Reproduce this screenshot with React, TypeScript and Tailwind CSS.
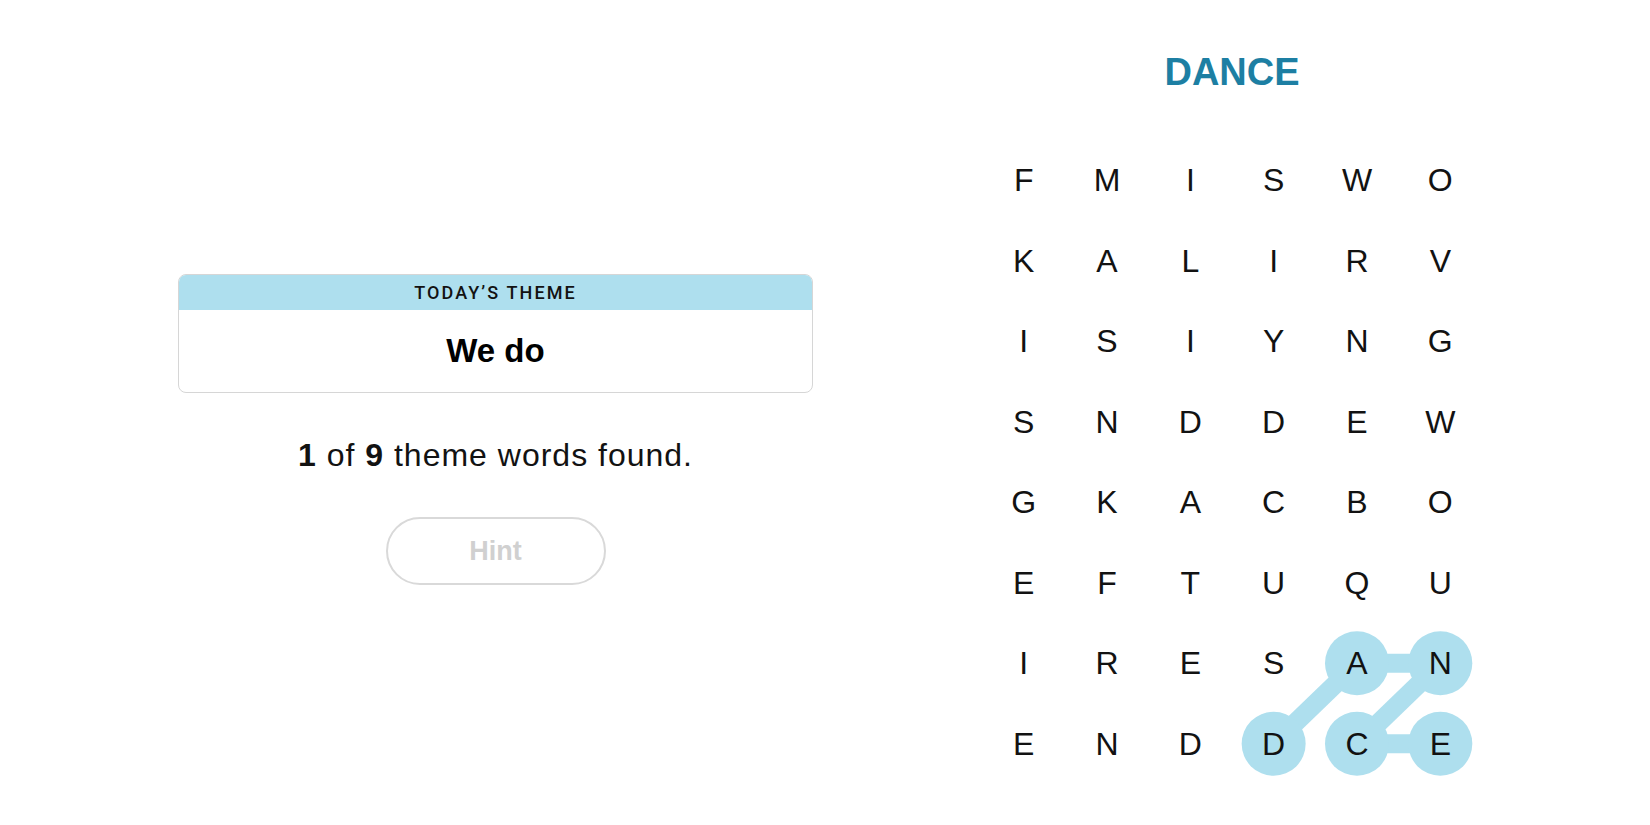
import React from 'react';

const grid: string[] = [
	'FMISWO',
	'KALIRV',
	'ISIYNG',
	'SNDDEW',
	'GKACBO',
	'EFTUQU',
	'IRESAN',
	'ENDDCE',
];

const CELL_W = 83.33;
const CELL_H = 80.5;

// found word path, [row, col]
const found: [number, number][] = [
	[7, 3],
	[6, 4],
	[6, 5],
	[7, 4],
	[7, 5],
];

const cx = (c: number) => CELL_W / 2 + CELL_W * c;
const cy = (r: number) => CELL_H / 2 + CELL_H * r;

const ThemeCard = () => (
	<div className="w-[635px] rounded-lg border border-[#d6d6d6] overflow-hidden">
		<div className="h-[35px] bg-[#aedfee] flex items-center justify-center">
			<span className="text-[18px] font-medium tracking-[2.1px] text-[#121212] font-['Roboto',sans-serif]">
				TODAY’S THEME
			</span>
		</div>
		<div className="h-[82px] flex items-center justify-center">
			<h2 className="text-[33px] font-bold text-black">We do</h2>
		</div>
	</div>
);

const LetterGrid = () => (
	<div className="relative w-[500px] h-[644px]">
		<svg className="absolute inset-0" width={500} height={644}>
			{found.slice(1).map(([r, c], i) => {
				const [pr, pc] = found[i];
				return (
					<line
						key={i}
						x1={cx(pc)}
						y1={cy(pr)}
						x2={cx(c)}
						y2={cy(r)}
						stroke="#aedfee"
						strokeWidth={19}
					/>
				);
			})}
			{found.map(([r, c], i) => (
				<circle key={i} cx={cx(c)} cy={cy(r)} r={32} fill="#aedfee" />
			))}
		</svg>
		<div className="relative grid grid-cols-[repeat(6,83.33px)] grid-rows-[repeat(8,80.5px)]">
			{grid.map((row, r) =>
				row.split('').map((ch, c) => (
					<div
						key={`${r}-${c}`}
						className="flex items-center justify-center text-[32px] leading-[80.5px] text-[#121212]"
					>
						{ch}
					</div>
				))
			)}
		</div>
	</div>
);

export default function App() {
	return (
		<div className="w-full h-[825px] bg-white flex items-start pl-[178px] font-['Liberation_Sans',Arial,sans-serif]">
			<div className="w-[635px] pt-[274px] flex flex-col items-center">
				<ThemeCard />
				<p className="mt-[42px] text-[32px] leading-[40px] tracking-[1px] text-[#121212]">
					<b>1</b> of <b>9</b> theme words found.
				</p>
				<button
					disabled
					className="mt-[42px] w-[220px] h-[68px] rounded-full border-2 border-[#d9d9d9] bg-white text-[27px] font-bold text-[#d0d0d0]"
				>
					Hint
				</button>
			</div>
			<div className="ml-[169px] w-[500px] pt-[50px] flex flex-col items-center">
				<h1 className="h-[44px] text-[38px] leading-[44px] font-bold text-[#1d7fa3]">DANCE</h1>
				<div className="mt-[46px]">
					<LetterGrid />
				</div>
			</div>
		</div>
	);
}
